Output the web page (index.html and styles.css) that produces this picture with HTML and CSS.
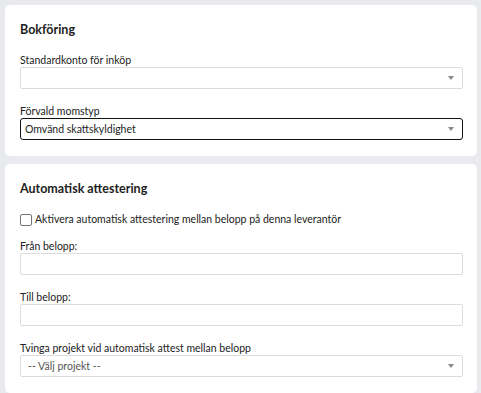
FILE: index.html
```html
<!DOCTYPE html>
<html lang="sv">
  <head>
    <meta charset="UTF-8" />
    <title>Leverantör</title>
    <link rel="stylesheet" href="styles.css">
  </head>
  <body>
    <div class="card">
      <h2>Bokföring</h2>
      <div class="field">
        <label>Standardkonto för inköp</label>
        <div class="select"><span></span><i class="arrow"></i></div>
      </div>
      <div class="field">
        <label>Förvald momstyp</label>
        <div class="select focused"><span>Omvänd skattskyldighet</span><i class="arrow"></i></div>
      </div>
    </div>

    <div class="card">
      <h2>Automatisk attestering</h2>
      <label class="check">
        <span class="box"></span>
        Aktivera automatisk attestering mellan belopp på denna leverantör
      </label>
      <div class="field">
        <label>Från belopp:</label>
        <div class="input"></div>
      </div>
      <div class="field">
        <label>Till belopp:</label>
        <div class="input"></div>
      </div>
      <div class="field">
        <label>Tvinga projekt vid automatisk attest mellan belopp</label>
        <div class="select"><span class="placeholder">-- Välj projekt --</span><i class="arrow"></i></div>
      </div>
    </div>
  </body>
</html>
```

FILE: styles.css
```css
body {
  font-family: Lato, "Open Sans", sans-serif;
  background: #e9eaed;
  margin: 0;
  padding: 5px 4px 0 5px;
  color: #222;
  font-size: 10.5px;
}
.card {
  background: #fff;
  border-radius: 5px;
  padding: 16px 14px 16px 15px;
  margin-bottom: 8px;
}
.card h2 {
  font-size: 12.5px;
  font-weight: bold;
  line-height: 17px;
  margin: 0 0 16px;
  color: #222;
}
.field {
  margin-bottom: 16px;
}
.field:last-child {
  margin-bottom: 0;
}
.field label {
  display: block;
  line-height: 13px;
  margin-bottom: 0;
}
.input,
.select {
  box-sizing: border-box;
  height: 22px;
  border: 1px solid #dcdcdc;
  border-radius: 2px;
  display: flex;
  align-items: center;
  padding: 0 8px 0 4px;
}
.select span {
  flex: 1;
}
.select.focused {
  border: 1.5px solid #111;
  border-radius: 3px;
}
.placeholder {
  color: #555;
  padding-left: 3px;
}
.arrow {
  width: 0;
  height: 0;
  border-left: 3.5px solid transparent;
  border-right: 3.5px solid transparent;
  border-top: 4px solid #888;
}
.check {
  display: flex;
  align-items: center;
  gap: 3px;
  line-height: 13px;
  margin-bottom: 14px;
}
.check .box {
  width: 10px;
  height: 10px;
  border: 1px solid #777;
  border-radius: 2px;
}
```
